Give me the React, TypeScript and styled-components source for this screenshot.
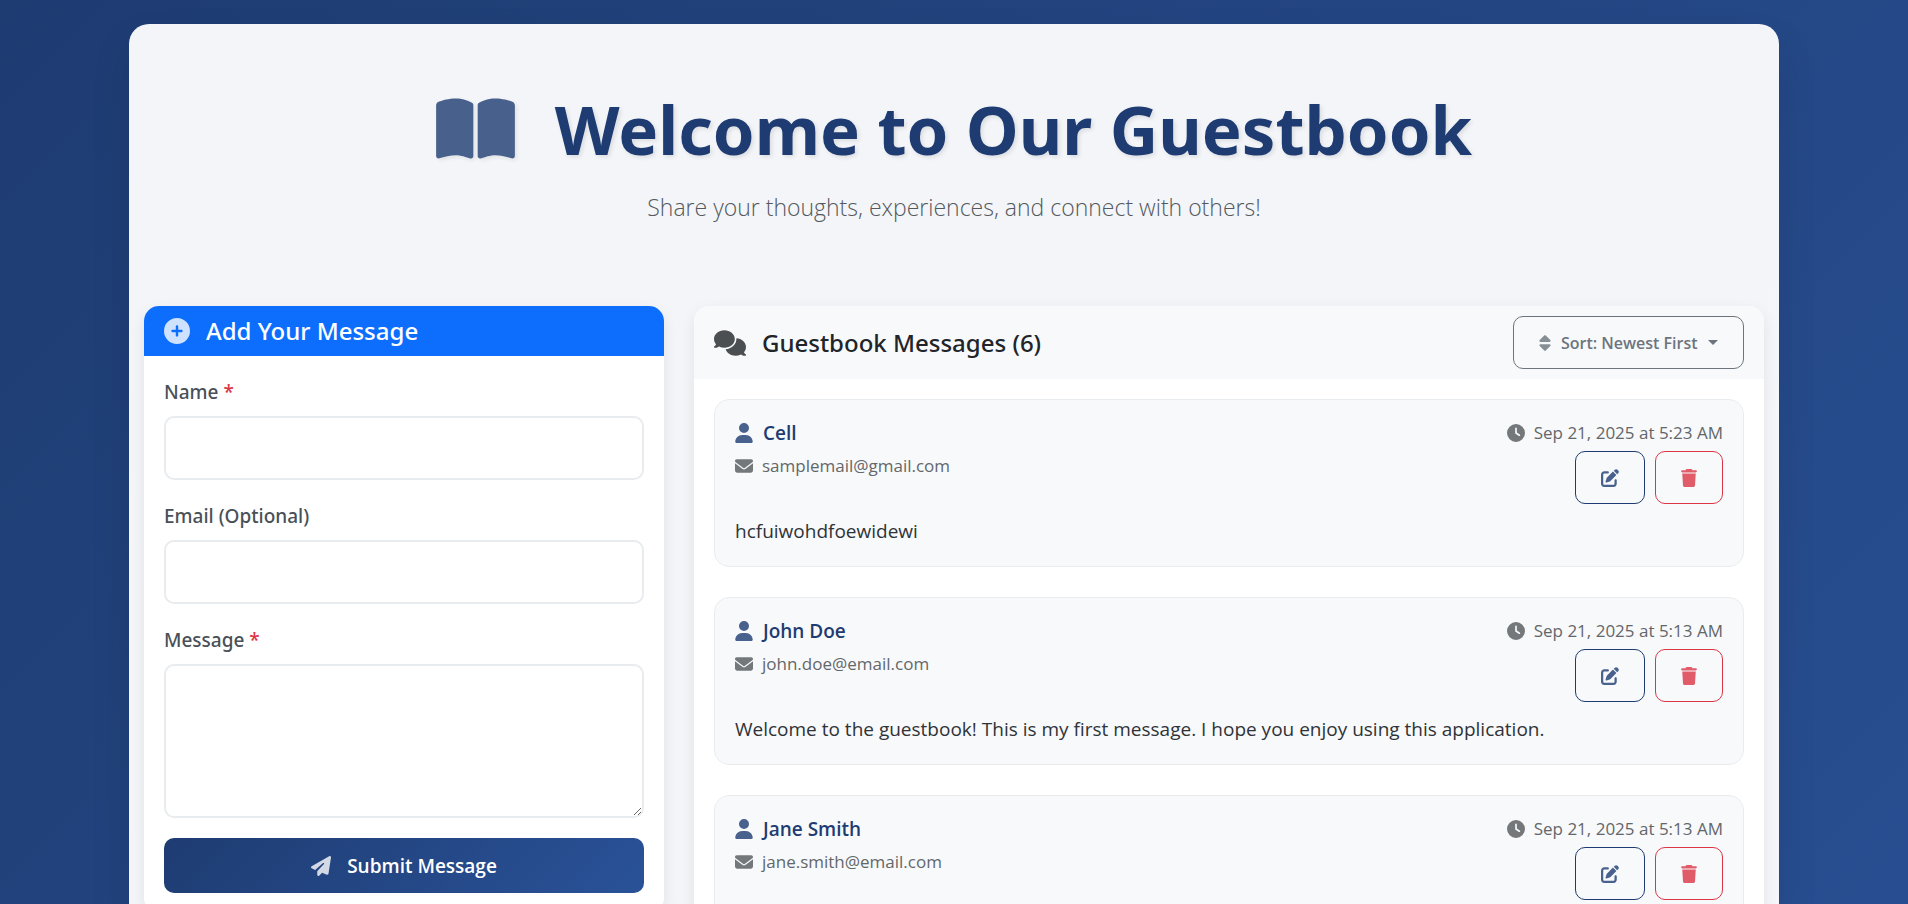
import React from 'react';
import styled, { createGlobalStyle, css } from 'styled-components';
import {
  FaBookOpen,
  FaCirclePlus,
  FaClock,
  FaComments,
  FaEnvelope,
  FaPaperPlane,
  FaPenToSquare,
  FaSort,
  FaTrash,
  FaUser,
} from 'react-icons/fa6';

const medium = '"Noto Sans", "Open Sans", sans-serif';
const body = '"Open Sans", "Noto Sans", sans-serif';
const navy = '#1e3c72';
const royal = '#2a5298';
const red = '#dc3545';

const GlobalStyle = createGlobalStyle`
  *, *::before, *::after { box-sizing: border-box; }
  html {
    min-height: 100%;
    background: linear-gradient(135deg, ${navy} 0%, ${royal} 118%);
  }
  body {
    margin: 0;
    padding: 24px;
    font-family: ${body};
    color: #212529;
  }
  button, input, textarea, select { font: inherit; }
`;

const Page = styled.main`
  max-width: 1650px;
  margin: 0 auto;
  padding-bottom: 30px;
  border-radius: 20px;
  background: rgba(255, 255, 255, 0.95);
  box-shadow: 0 20px 40px rgba(0, 0, 0, 0.1);
`;

const Hero = styled.header`
  padding: 64px 24px 82px;
  text-align: center;
`;

const Title = styled.h1`
  display: flex;
  align-items: center;
  justify-content: center;
  gap: 40px;
  margin: 0;
  font-family: ${medium};
  font-size: 67px;
  font-weight: 700;
  line-height: 82px;
  color: ${navy};
  text-shadow: 2px 2px 4px rgba(0, 0, 0, 0.1);
`;

const Subtitle = styled.p`
  margin: 20px 0 0;
  font-size: 23px;
  font-weight: 300;
  line-height: 34px;
  color: #54595e;
`;

const Icon = styled.span<{ $size: number; $width?: number; $color?: string; $shadow?: boolean }>`
  display: inline-flex;
  flex: none;
  color: ${(p) => p.$color ?? 'inherit'};
  opacity: 0.8;
  ${(p) => p.$shadow && css`filter: drop-shadow(2px 2px 2px rgba(0, 0, 0, 0.1));`}

  svg {
    width: ${(p) => p.$width ?? p.$size}px;
    height: ${(p) => p.$size}px;
  }
`;

const Columns = styled.div`
  display: flex;
  flex-wrap: wrap;
  align-items: flex-start;
`;

const Column = styled.div<{ $span: number }>`
  flex: 0 0 calc(100% * ${(p) => p.$span} / 12);
  padding: 0 15px;

  @media (max-width: 900px) {
    flex-basis: 100%;
    margin-bottom: 30px;
  }
`;

const Panel = styled.section`
  overflow: hidden;
  border-radius: 15px;
  background: #fff;
  box-shadow: 0 5px 15px rgba(0, 0, 0, 0.08);
`;

const PanelHeader = styled.div<{ $primary?: boolean }>`
  display: flex;
  align-items: center;
  justify-content: space-between;
  padding: ${(p) => (p.$primary ? '8px' : '10px')} 20px;
  background: ${(p) => (p.$primary ? '#0d6efd' : '#f8f9fb')};
  color: ${(p) => (p.$primary ? '#fff' : '#212529')};
`;

const PanelTitle = styled.h2`
  display: flex;
  align-items: center;
  gap: 16px;
  margin: 0;
  font-family: ${medium};
  font-size: 24px;
  font-weight: 500;
  line-height: 34px;
`;

const Form = styled.form`
  display: flex;
  flex-direction: column;
  gap: 20px;
  padding: 20px;
`;

const Field = styled.div`
  display: flex;
  flex-direction: column;
  gap: 8px;
`;

const Label = styled.label`
  font-family: ${medium};
  font-size: 19px;
  font-weight: 500;
  line-height: 32px;
  color: #495057;
`;

const Required = styled.span`
  color: ${red};
`;

const inputLook = css`
  width: 100%;
  border: 2px solid #e9ecef;
  border-radius: 10px;
  background: #fff;
  padding: 15px 20px;
  font-size: 19px;
  color: #212529;
  outline: none;

  &:focus {
    border-color: ${royal};
  }
`;

const TextInput = styled.input`
  ${inputLook}
  height: 64px;
`;

const TextArea = styled.textarea`
  ${inputLook}
  height: 154px;
  resize: vertical;
`;

const SubmitButton = styled.button`
  display: flex;
  align-items: center;
  justify-content: center;
  gap: 16px;
  height: 55px;
  border: 0;
  border-radius: 10px;
  background: linear-gradient(135deg, ${navy} 0%, ${royal} 100%);
  color: #fff;
  font-size: 19px;
  font-weight: 600;
  cursor: pointer;
`;

const SortControl = styled.label`
  display: flex;
  align-items: center;
  gap: 10px;
  height: 53px;
  padding: 0 25px;
  border: 1px solid #6c757d;
  border-radius: 10px;
  color: #6c757d;
`;

const SortSelect = styled.select`
  appearance: none;
  border: 0;
  padding: 0;
  background: transparent;
  color: inherit;
  font-size: 16px;
  font-weight: 600;
  outline: none;
  cursor: pointer;
`;

const Caret = styled.span`
  border-top: 5px solid currentColor;
  border-left: 5px solid transparent;
  border-right: 5px solid transparent;
`;

const MessageList = styled.ul`
  display: flex;
  flex-direction: column;
  gap: 30px;
  margin: 0;
  padding: 20px;
  list-style: none;
`;

const MessageCard = styled.li`
  padding: 20px;
  border: 1px solid #e9ecef;
  border-radius: 15px;
  background: #f8f9fb;
`;

const MessageTop = styled.div`
  display: flex;
  justify-content: space-between;
`;

const Author = styled.div`
  display: flex;
  flex-direction: column;
  gap: 7px;
`;

const Name = styled.h3`
  display: flex;
  align-items: center;
  gap: 10px;
  margin: 0;
  font-size: 19px;
  font-weight: 600;
  line-height: 26px;
  color: ${navy};
`;

const Meta = styled.div`
  display: flex;
  align-items: center;
  gap: 9px;
  font-size: 17px;
  line-height: 26px;
  color: #63676a;
`;

const MessageSide = styled.div`
  display: flex;
  flex-direction: column;
  align-items: flex-end;
  gap: 5px;
`;

const Actions = styled.div`
  display: flex;
  gap: 10px;
`;

const ActionButton = styled.button<{ $color: string }>`
  display: flex;
  align-items: center;
  height: 53px;
  padding: 0 25px;
  border: 1px solid ${(p) => p.$color};
  border-radius: 10px;
  background: transparent;
  color: ${(p) => p.$color};
  cursor: pointer;
`;

const MessageText = styled.p`
  margin: 12px 0 0;
  font-size: 19px;
  line-height: 30px;
  color: #2f3337;
`;

const messages = [
  {
    name: 'Cell',
    email: 'samplemail@gmail.com',
    date: 'Sep 21, 2025 at 5:23 AM',
    text: 'hcfuiwohdfoewidewi',
  },
  {
    name: 'John Doe',
    email: 'john.doe@email.com',
    date: 'Sep 21, 2025 at 5:13 AM',
    text: 'Welcome to the guestbook! This is my first message. I hope you enjoy using this application.',
  },
  {
    name: 'Jane Smith',
    email: 'jane.smith@email.com',
    date: 'Sep 21, 2025 at 5:13 AM',
    text: '',
  },
];

function MessageForm() {
  return (
    <Panel>
      <PanelHeader $primary>
        <PanelTitle>
          <Icon $size={26}><FaCirclePlus /></Icon>
          Add Your Message
        </PanelTitle>
      </PanelHeader>
      <Form onSubmit={(e) => e.preventDefault()}>
        <Field>
          <Label htmlFor="name">Name <Required>*</Required></Label>
          <TextInput id="name" type="text" required />
        </Field>
        <Field>
          <Label htmlFor="email">Email (Optional)</Label>
          <TextInput id="email" type="email" />
        </Field>
        <Field>
          <Label htmlFor="message">Message <Required>*</Required></Label>
          <TextArea id="message" required />
        </Field>
        <SubmitButton type="submit">
          <Icon $size={20}><FaPaperPlane /></Icon>
          Submit Message
        </SubmitButton>
      </Form>
    </Panel>
  );
}

function Message({ name, email, date, text }: (typeof messages)[number]) {
  return (
    <MessageCard>
      <MessageTop>
        <Author>
          <Name><Icon $size={20} $width={18}><FaUser /></Icon>{name}</Name>
          <Meta><Icon $size={18} $color="#54595c"><FaEnvelope /></Icon>{email}</Meta>
        </Author>
        <MessageSide>
          <Meta><Icon $size={18} $color="#54595c"><FaClock /></Icon>{date}</Meta>
          <Actions>
            <ActionButton type="button" aria-label="Edit" $color={navy}>
              <Icon $size={18}><FaPenToSquare /></Icon>
            </ActionButton>
            <ActionButton type="button" aria-label="Delete" $color={red}>
              <Icon $size={18} $width={16}><FaTrash /></Icon>
            </ActionButton>
          </Actions>
        </MessageSide>
      </MessageTop>
      <MessageText>{text}</MessageText>
    </MessageCard>
  );
}

export default function App() {
  return (
    <>
      <GlobalStyle />
      <Page>
        <Hero>
          <Title>
            <Icon $size={70} $width={79} $shadow><FaBookOpen /></Icon>
            Welcome to Our Guestbook
          </Title>
          <Subtitle>Share your thoughts, experiences, and connect with others!</Subtitle>
        </Hero>
        <Columns>
          <Column $span={4}>
            <MessageForm />
          </Column>
          <Column $span={8}>
            <Panel>
              <PanelHeader>
                <PanelTitle>
                  <Icon $size={26} $width={32}><FaComments /></Icon>
                  Guestbook Messages (6)
                </PanelTitle>
                <SortControl>
                  <Icon $size={18} $width={12}><FaSort /></Icon>
                  <SortSelect aria-label="Sort messages">
                    <option>Sort: Newest First</option>
                  </SortSelect>
                  <Caret />
                </SortControl>
              </PanelHeader>
              <MessageList>
                {messages.map((m) => (
                  <Message key={m.name} {...m} />
                ))}
              </MessageList>
            </Panel>
          </Column>
        </Columns>
      </Page>
    </>
  );
}
